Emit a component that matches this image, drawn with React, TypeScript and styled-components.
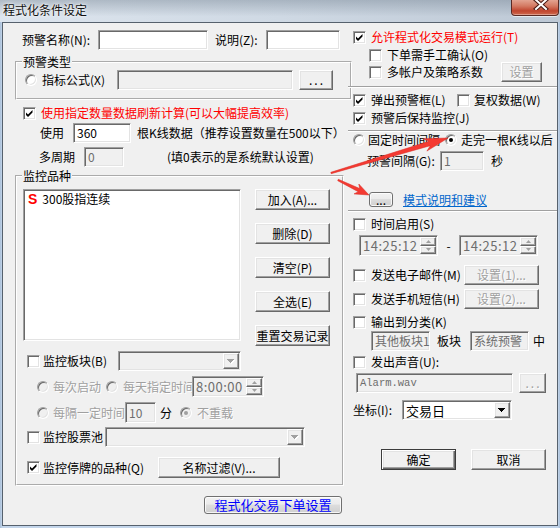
import React from 'react';
import styled, { createGlobalStyle, css } from 'styled-components';

const GlobalStyle = createGlobalStyle`
  html, body { margin: 0; padding: 0; background: #ffffff; }
  body {
    font-family: "Noto Sans CJK SC", "Liberation Sans", sans-serif;
    font-size: 12px;
    color: #000;
  }
  * { box-sizing: border-box; }
`;

const sunken = css`
  border: 1px solid;
  border-color: #a0a0a0 #ffffff #ffffff #a0a0a0;
  box-shadow: inset 1px 1px 0 #696969, inset -1px -1px 0 #e3e3e3;
`;

const raised = css`
  border: 1px solid;
  border-color: #ffffff #696969 #696969 #ffffff;
  box-shadow: inset -1px -1px 0 #a0a0a0, inset 1px 1px 0 #e3e3e3;
  background: #f0f0f0;
`;

const Window = styled.div`
  position: relative;
  width: 560px;
  height: 528px;
  background: linear-gradient(90deg, #a9bfd8 0px, #c3d5ea 2px, #c3d5ea 558px, #a9bfd8 560px);
  display: flex;
  flex-direction: column;
  overflow: hidden;
`;

const TitleBar = styled.div`
  height: 22px;
  flex: none;
  display: flex;
  align-items: flex-start;
  background:
    linear-gradient(180deg, rgba(110, 125, 140, 0.4) 0%, rgba(255, 255, 255, 0) 75%),
    linear-gradient(90deg, #dde5ee 0%, #cfd9e4 50%, #bdc8d5 100%);
`;

const TitleText = styled.span`
  margin: 2px 0 0 3px;
  line-height: 15px;
  font-size: 12px;
  color: #111;
  text-shadow: 0 0 5px rgba(255, 255, 255, 0.95), 0 0 2px #ffffff;
`;

const CloseButton = styled.div`
  margin-left: auto;
  margin-right: 1px;
  width: 48px;
  height: 16px;
  border: 1px solid #5a2a24;
  border-top: none;
  border-radius: 0 0 4px 4px;
  background: linear-gradient(180deg, #e3a391 0%, #d47a63 40%, #c0452f 72%, #cf6a4f 100%);
  box-shadow: inset 0 -1px 0 rgba(255, 255, 255, 0.35), 0 1px 0 rgba(255, 255, 255, 0.6);
  display: flex;
  justify-content: center;
  align-items: flex-start;
  padding-left: 12px;
`;

const Client = styled.div`
  flex: 1;
  margin: 0 2px 2px 2px;
  border: 1px solid #56616d;
  background: #f0f0f0;
  display: grid;
  grid-template-columns: 333px 1fr;
  align-items: start;
  padding-left: 12px;
`;

const Column = styled.div`
  display: flex;
  flex-direction: column;
  min-width: 0;
`;

const Row = styled.div<{ $mt?: number; $pl?: number; $h?: number }>`
  display: flex;
  align-items: center;
  flex: none;
  margin-top: ${p => p.$mt ?? 0}px;
  padding-left: ${p => p.$pl ?? 0}px;
  height: ${p => p.$h ?? 14}px;
`;

const Text = styled.span<{ $w?: number; $ml?: number; $color?: string; $dis?: boolean; $center?: boolean }>`
  flex: none;
  white-space: nowrap;
  line-height: 14px;
  margin-left: ${p => p.$ml ?? 0}px;
  ${p => p.$w !== undefined && css`width: ${p.$w}px;`}
  ${p => p.$center && css`text-align: center;`}
  color: ${p => (p.$dis ? '#a0a0a0' : p.$color ?? '#000')};
  ${p => p.$dis && css`text-shadow: 1px 1px 0 #ffffff;`}
`;

const Link = styled.span<{ $ml?: number }>`
  margin-left: ${p => p.$ml ?? 0}px;
  color: #0066cc;
  text-decoration: underline;
  line-height: 14px;
  white-space: nowrap;
`;

const TextBox = styled.div<{ $w: number; $h?: number; $dis?: boolean; $ml?: number; $mono?: boolean }>`
  flex: none;
  width: ${p => p.$w}px;
  height: ${p => p.$h ?? 20}px;
  margin-left: ${p => p.$ml ?? 0}px;
  ${sunken}
  background: ${p => (p.$dis ? '#f0f0f0' : '#ffffff')};
  color: ${p => (p.$dis ? '#6d6d6d' : '#000')};
  display: flex;
  align-items: center;
  padding-left: 3px;
  white-space: nowrap;
  line-height: 14px;
  ${p => p.$mono && css`font-family: "Liberation Mono", monospace; font-size: 10.5px;`}
`;

const Button = styled.button<{ $w: number; $h?: number; $ml?: number; $dis?: boolean; $default?: boolean }>`
  flex: none;
  width: ${p => p.$w}px;
  height: ${p => p.$h ?? 21}px;
  margin: 0 0 0 ${p => p.$ml ?? 0}px;
  padding: 0;
  font: inherit;
  font-size: 12px;
  line-height: 14px;
  ${raised}
  color: ${p => (p.$dis ? '#a0a0a0' : '#000')};
  ${p => p.$dis && css`text-shadow: 1px 1px 0 #ffffff;`}
  ${p =>
    p.$default &&
    css`
      border: 1px solid #3c3c3c;
      box-shadow: inset 1px 1px 0 #ffffff, inset -1px -1px 0 #696969, inset -2px -2px 0 #a0a0a0,
        inset 2px 2px 0 #e3e3e3;
    `}
  white-space: nowrap;
  display: flex;
  align-items: center;
  justify-content: center;
`;

const Dots = styled.span`
  letter-spacing: 2px;
  margin-left: 2px;
`;

const ThemedButton = styled.button<{ $w: number; $h: number; $ml?: number; $blue?: boolean }>`
  flex: none;
  width: ${p => p.$w}px;
  height: ${p => p.$h}px;
  margin: 0 0 0 ${p => p.$ml ?? 0}px;
  padding: 0;
  font: inherit;
  font-size: ${p => (p.$blue ? 13 : 12)}px;
  line-height: 14px;
  border: 1px solid #707070;
  border-radius: 3px;
  background: linear-gradient(180deg, #f2f2f2 0%, #ebebeb 45%, #dddddd 50%, #cfcfcf 100%);
  box-shadow: inset 0 0 0 1px rgba(255, 255, 255, 0.8);
  color: ${p => (p.$blue ? '#0000ff' : '#000')};
  display: flex;
  align-items: center;
  justify-content: center;
  white-space: nowrap;
`;

const CheckFrame = styled.span<{ $ml?: number }>`
  flex: none;
  width: 13px;
  height: 13px;
  margin-left: ${p => p.$ml ?? 0}px;
  ${sunken}
  background: #ffffff;
  display: flex;
  align-items: center;
  justify-content: center;
`;

const RadioFrame = styled.span<{ $ml?: number; $dis?: boolean }>`
  flex: none;
  width: 12px;
  height: 12px;
  margin-left: ${p => p.$ml ?? 0}px;
  border-radius: 50%;
  border: 1px solid;
  border-color: #a0a0a0 #ffffff #ffffff #a0a0a0;
  box-shadow: inset 1px 1px 0 #696969, inset -1px -1px 0 #e3e3e3;
  background: ${p => (p.$dis ? '#f0f0f0' : '#ffffff')};
  display: flex;
  align-items: center;
  justify-content: center;
`;

const RadioDot = styled.span<{ $dis?: boolean }>`
  width: 4px;
  height: 4px;
  border-radius: 50%;
  background: ${p => (p.$dis ? '#a0a0a0' : '#000')};
`;

const GroupBox = styled.fieldset<{ $w: number; $mt: number }>`
  width: ${p => p.$w}px;
  margin: ${p => p.$mt}px 0 0 0;
  padding: 0;
  min-width: 0;
  border: 2px groove #ffffff;
  flex: none;
`;

const Legend = styled.legend`
  margin-left: 5px;
  padding: 0 1px;
  line-height: 14px;
  font-size: 12px;
`;

const GroupBody = styled.div<{ $pt: number; $pb: number; $pl: number }>`
  display: flex;
  flex-direction: column;
  padding: ${p => p.$pt}px 0 ${p => p.$pb}px ${p => p.$pl}px;
`;

const ListRow = styled.div`
  display: flex;
  align-items: flex-start;
  height: 157px;
`;

const ListBox = styled.div`
  width: 218px;
  height: 152px;
  ${sunken}
  background: #ffffff;
  padding: 1px 0 0 4px;
`;

const ListItem = styled.div`
  display: flex;
  align-items: center;
  height: 16px;
`;

const StockMark = styled.span`
  font-family: "Liberation Sans", Arial, sans-serif;
  font-weight: bold;
  font-size: 14px;
  color: #ff0000;
  line-height: 14px;
`;

const ButtonStack = styled.div`
  display: flex;
  flex-direction: column;
  gap: 13px;
  margin-left: 14px;
`;

const Separator = styled.div<{ $mt: number }>`
  flex: none;
  height: 2px;
  margin-top: ${p => p.$mt}px;
  border-top: 1px solid #a0a0a0;
  border-bottom: 1px solid #ffffff;
`;

const ComboFrame = styled.div<{ $w: number; $h?: number; $dis?: boolean; $ml?: number }>`
  flex: none;
  width: ${p => p.$w}px;
  height: ${p => p.$h ?? 20}px;
  margin-left: ${p => p.$ml ?? 0}px;
  ${sunken}
  background: ${p => (p.$dis ? '#f0f0f0' : '#ffffff')};
  display: flex;
  padding: 1px;
`;

const ComboValue = styled.span`
  flex: 1;
  display: flex;
  align-items: center;
  padding-left: 2px;
  font-size: 13px;
  white-space: nowrap;
`;

const DropButton = styled.span`
  flex: none;
  width: 16px;
  ${raised}
  display: flex;
  align-items: center;
  justify-content: center;
`;

const SpinFrame = styled.div<{ $w: number; $h?: number }>`
  flex: none;
  width: ${p => p.$w}px;
  height: ${p => p.$h ?? 21}px;
  ${sunken}
  background: #f0f0f0;
  display: flex;
  padding: 1px;
`;

const SpinValue = styled.span`
  flex: 1;
  display: flex;
  align-items: center;
  padding-left: 2px;
  color: #6d6d6d;
  font-size: 13px;
  letter-spacing: 0.5px;
  white-space: nowrap;
`;

const SpinButtons = styled.span`
  flex: none;
  width: 16px;
  display: flex;
  flex-direction: column;
`;

const SpinHalf = styled.span`
  flex: 1;
  ${raised}
  display: flex;
  align-items: center;
  justify-content: center;
`;

const Overlay = styled.svg`
  position: absolute;
  left: 0;
  top: 0;
  pointer-events: none;
`;

function Check({ checked, ml }: { checked?: boolean; ml?: number }) {
  return (
    <CheckFrame $ml={ml}>
      {checked && (
        <svg width="9" height="9" viewBox="0 0 9 9">
          <polygon points="1,3.5 3,5.5 7.5,1 7.5,3.5 3,8 1,6" fill="#000" />
        </svg>
      )}
    </CheckFrame>
  );
}

function Radio({ checked, dis, ml }: { checked?: boolean; dis?: boolean; ml?: number }) {
  return <RadioFrame $ml={ml} $dis={dis}>{checked && <RadioDot $dis={dis} />}</RadioFrame>;
}

function DownArrow({ dis }: { dis?: boolean }) {
  return (
    <svg width="8" height="5" viewBox="0 0 8 5" shapeRendering="crispEdges">
      {dis && <polygon points="1,1 8,1 5,5 4,5" fill="#ffffff" />}
      <polygon points="0,0 7,0 4,4 3,4" fill={dis ? '#a0a0a0' : '#000'} />
    </svg>
  );
}

function Combo({ w, h, dis, value, ml }: { w: number; h?: number; dis?: boolean; value?: string; ml?: number }) {
  return (
    <ComboFrame $w={w} $h={h} $dis={dis} $ml={ml}>
      <ComboValue>{value}</ComboValue>
      <DropButton>
        <DownArrow dis={dis} />
      </DropButton>
    </ComboFrame>
  );
}

function Spin({ w, h, value }: { w: number; h?: number; value: string }) {
  return (
    <SpinFrame $w={w} $h={h}>
      <SpinValue>{value}</SpinValue>
      <SpinButtons>
        <SpinHalf>
          <svg width="5" height="3" viewBox="0 0 5 3">
            <polygon points="2.5,0 5,3 0,3" fill="#a0a0a0" />
          </svg>
        </SpinHalf>
        <SpinHalf>
          <svg width="5" height="3" viewBox="0 0 5 3">
            <polygon points="0,0 5,0 2.5,3" fill="#a0a0a0" />
          </svg>
        </SpinHalf>
      </SpinButtons>
    </SpinFrame>
  );
}

function arrowPath(
  x1: number,
  y1: number,
  x2: number,
  y2: number,
  tailW: number,
  shaftW: number,
  headLen: number,
  headW: number
) {
  const dx = x2 - x1;
  const dy = y2 - y1;
  const L = Math.hypot(dx, dy);
  const ux = dx / L;
  const uy = dy / L;
  const nx = -uy;
  const ny = ux;
  const bx = x2 - ux * headLen;
  const by = y2 - uy * headLen;
  const nbx = x2 - ux * headLen * 0.8;
  const nby = y2 - uy * headLen * 0.8;
  const pts = [
    [x1 + (nx * tailW) / 2, y1 + (ny * tailW) / 2],
    [nbx + (nx * shaftW) / 2, nby + (ny * shaftW) / 2],
    [bx + (nx * headW) / 2, by + (ny * headW) / 2],
    [x2, y2],
    [bx - (nx * headW) / 2, by - (ny * headW) / 2],
    [nbx - (nx * shaftW) / 2, nby - (ny * shaftW) / 2],
    [x1 - (nx * tailW) / 2, y1 - (ny * tailW) / 2],
  ];
  return pts.map(p => `${p[0].toFixed(1)},${p[1].toFixed(1)}`).join(' ');
}

export default function App() {
  return (
    <>
      <GlobalStyle />
      <Window>
        <TitleBar>
          <TitleText>程式化条件设定</TitleText>
          <CloseButton>
            <svg width="16" height="10" viewBox="0 0 16 10">
              <path d="M3 0 L13 9 M13 0 L3 9" stroke="#4a1a14" strokeWidth="4" strokeLinecap="square" />
              <path d="M3 0 L13 9 M13 0 L3 9" stroke="#ffffff" strokeWidth="2" strokeLinecap="square" />
            </svg>
          </CloseButton>
        </TitleBar>
        <Client>
          <Column>
            <Row $mt={7} $pl={7} $h={20}>
              <Text $w={76}>预警名称(N):</Text>
              <TextBox $w={110} />
              <Text $ml={7} $w={51}>说明(Z):</Text>
              <TextBox $w={74} />
            </Row>

            <GroupBox $w={337} $mt={5}>
              <Legend>预警类型</Legend>
              <GroupBody $pt={1} $pb={8} $pl={8}>
                <Row $h={20}>
                  <Radio />
                  <Text $ml={5} $w={75}>指标公式(X)</Text>
                  <TextBox $w={176} $dis />
                  <Button $w={34} $h={20} $ml={6}>
                    <Dots>...</Dots>
                  </Button>
                </Row>
              </GroupBody>
            </GroupBox>

            <Row $mt={6} $pl={8}>
              <Check checked />
              <Text $ml={5} $color="#ff0000">
                使用指定数量数据刷新计算(可以大幅提高效率)
              </Text>
            </Row>
            <Row $mt={3} $pl={25} $h={20}>
              <Text $w={33}>使用</Text>
              <TextBox $w={58}>360</TextBox>
              <Text $ml={6}>根K线数据（推荐设置数量在500以下）</Text>
            </Row>
            <Row $mt={4} $pl={24} $h={20}>
              <Text $w={45}>多周期</Text>
              <TextBox $w={40} $dis>
                0
              </TextBox>
              <Text $ml={43}>(填0表示的是系统默认设置)</Text>
            </Row>

            <GroupBox $w={329} $mt={2}>
              <Legend>监控品种</Legend>
              <GroupBody $pt={6} $pb={6} $pl={6}>
                <ListRow>
                  <ListBox>
                    <ListItem>
                      <StockMark>S</StockMark>
                      <Text $ml={5}>300股指连续</Text>
                    </ListItem>
                  </ListBox>
                  <ButtonStack>
                    <Button $w={75}>加入(A)...</Button>
                    <Button $w={75}>删除(D)</Button>
                    <Button $w={75}>清空(P)</Button>
                    <Button $w={75}>全选(E)</Button>
                    <Button $w={75}>重置交易记录</Button>
                  </ButtonStack>
                </ListRow>

                <Row $mt={5} $pl={4} $h={20}>
                  <Check />
                  <Text $ml={3} $w={75}>
                    监控板块(B)
                  </Text>
                  <Combo w={123} dis />
                </Row>
                <Row $mt={5} $pl={14} $h={21}>
                  <Radio dis />
                  <Text $ml={4} $w={48} $dis>
                    每次启动
                  </Text>
                  <Radio dis ml={5} />
                  <Text $ml={5} $w={69} $dis>
                    每天指定时间
                  </Text>
                  <Spin w={72} value="8:00:00" />
                </Row>
                <Row $mt={5} $pl={14} $h={21}>
                  <Radio dis />
                  <Text $ml={4} $w={72} $dis>
                    每隔一定时间
                  </Text>
                  <TextBox $w={31} $h={21} $dis>
                    10
                  </TextBox>
                  <Text $ml={4}>分</Text>
                  <Radio dis checked ml={8} />
                  <Text $ml={5} $dis>
                    不重载
                  </Text>
                </Row>
                <Row $mt={4} $pl={4} $h={20}>
                  <Check />
                  <Text $ml={3} $w={62}>
                    监控股票池
                  </Text>
                  <Combo w={200} dis />
                </Row>
                <Row $mt={10} $pl={4} $h={21}>
                  <Check checked />
                  <Text $ml={3} $w={115}>
                    监控停牌的品种(Q)
                  </Text>
                  <Button $w={122}>名称过滤(V)...</Button>
                </Row>
              </GroupBody>
            </GroupBox>

            <Row $mt={10} $pl={189} $h={18}>
              <ThemedButton $w={138} $h={18} $blue>
                程式化交易下单设置
              </ThemedButton>
            </Row>
          </Column>

          <Column>
            <Row $mt={7} $pl={5}>
              <Check checked />
              <Text $ml={5} $color="#ff0000">
                允许程式化交易模式运行(T)
              </Text>
            </Row>
            <Row $mt={4} $pl={21}>
              <Check />
              <Text $ml={5}>下单需手工确认(O)</Text>
            </Row>
            <Row $pl={21} $h={20}>
              <Check />
              <Text $ml={5} $w={114}>
                多帐户及策略系数
              </Text>
              <Button $w={41} $h={20} $dis>
                设置
              </Button>
            </Row>
            <Separator $mt={4} />
            <Row $mt={5} $pl={5}>
              <Check checked />
              <Text $ml={5} $w={81}>
                弹出预警框(L)
              </Text>
              <Check ml={5} />
              <Text $ml={4}>复权数据(W)</Text>
            </Row>
            <Row $mt={4} $pl={5}>
              <Check checked />
              <Text $ml={5}>预警后保持监控(J)</Text>
            </Row>
            <Separator $mt={5} />
            <Row $mt={1} $pl={5}>
              <Radio />
              <Text $ml={3} $w={72}>
                固定时间间隔
              </Text>
              <Radio checked ml={5} />
              <Text $ml={4}>走完一根K线以后</Text>
            </Row>
            <Row $mt={4} $pl={19} $h={20}>
              <Text $w={73}>预警间隔(G):</Text>
              <TextBox $w={44} $dis>
                1
              </TextBox>
              <Text $ml={7}>秒</Text>
            </Row>
            <Row $mt={21} $pl={21} $h={15}>
              <ThemedButton $w={24} $h={15}>
                ...
              </ThemedButton>
              <Link $ml={10}>模式说明和建议</Link>
            </Row>
            <Separator $mt={3} />
            <Row $mt={5} $pl={5}>
              <Check />
              <Text $ml={5}>时间启用(S)</Text>
            </Row>
            <Row $mt={4} $pl={11} $h={21}>
              <Spin w={79} value="14:25:12" />
              <Text $w={21} $center>
                -
              </Text>
              <Spin w={79} value="14:25:12" />
            </Row>
            <Row $mt={9} $pl={5} $h={20}>
              <Check />
              <Text $ml={5} $w={93}>
                发送电子邮件(M)
              </Text>
              <Button $w={75} $h={20} $dis>
                设置(1)...
              </Button>
            </Row>
            <Row $mt={4} $pl={5} $h={20}>
              <Check />
              <Text $ml={5} $w={93}>
                发送手机短信(H)
              </Text>
              <Button $w={75} $h={20} $dis>
                设置(2)...
              </Button>
            </Row>
            <Row $mt={6} $pl={5}>
              <Check />
              <Text $ml={5}>输出到分类(K)</Text>
            </Row>
            <Row $mt={2} $pl={23} $h={20}>
              <TextBox $w={59} $dis>
                其他板块1
              </TextBox>
              <Text $ml={7} $w={24}>
                板块
              </Text>
              <TextBox $w={59} $ml={9} $dis>
                系统预警
              </TextBox>
              <Text $ml={4}>中</Text>
            </Row>
            <Row $mt={4} $pl={5}>
              <Check />
              <Text $ml={5}>发出声音(U):</Text>
            </Row>
            <Row $mt={4} $pl={8} $h={20}>
              <TextBox $w={157} $dis $mono>
                Alarm.wav
              </TextBox>
              <Button $w={27} $h={20} $ml={6} $dis>
                <Dots>...</Dots>
              </Button>
            </Row>
            <Row $mt={7} $pl={5} $h={20}>
              <Text $w={49}>坐标(I):</Text>
              <Combo w={110} value="交易日" />
            </Row>
            <Row $mt={29} $pl={33} $h={21}>
              <Button $w={75} $default>
                确定
              </Button>
              <Button $w={75} $ml={15}>
                取消
              </Button>
            </Row>
          </Column>
        </Client>
        <Overlay width="560" height="528" viewBox="0 0 560 528">
          <g fill="#f43a32" stroke="#d82a22" strokeWidth="0.5" strokeLinejoin="round">
            <polygon points={arrowPath(331, 173, 448, 138, 1.5, 4.5, 24, 13)} />
            <polygon points={arrowPath(338, 180, 369, 195, 1.5, 3.5, 14, 11)} />
          </g>
        </Overlay>
      </Window>
    </>
  );
}
